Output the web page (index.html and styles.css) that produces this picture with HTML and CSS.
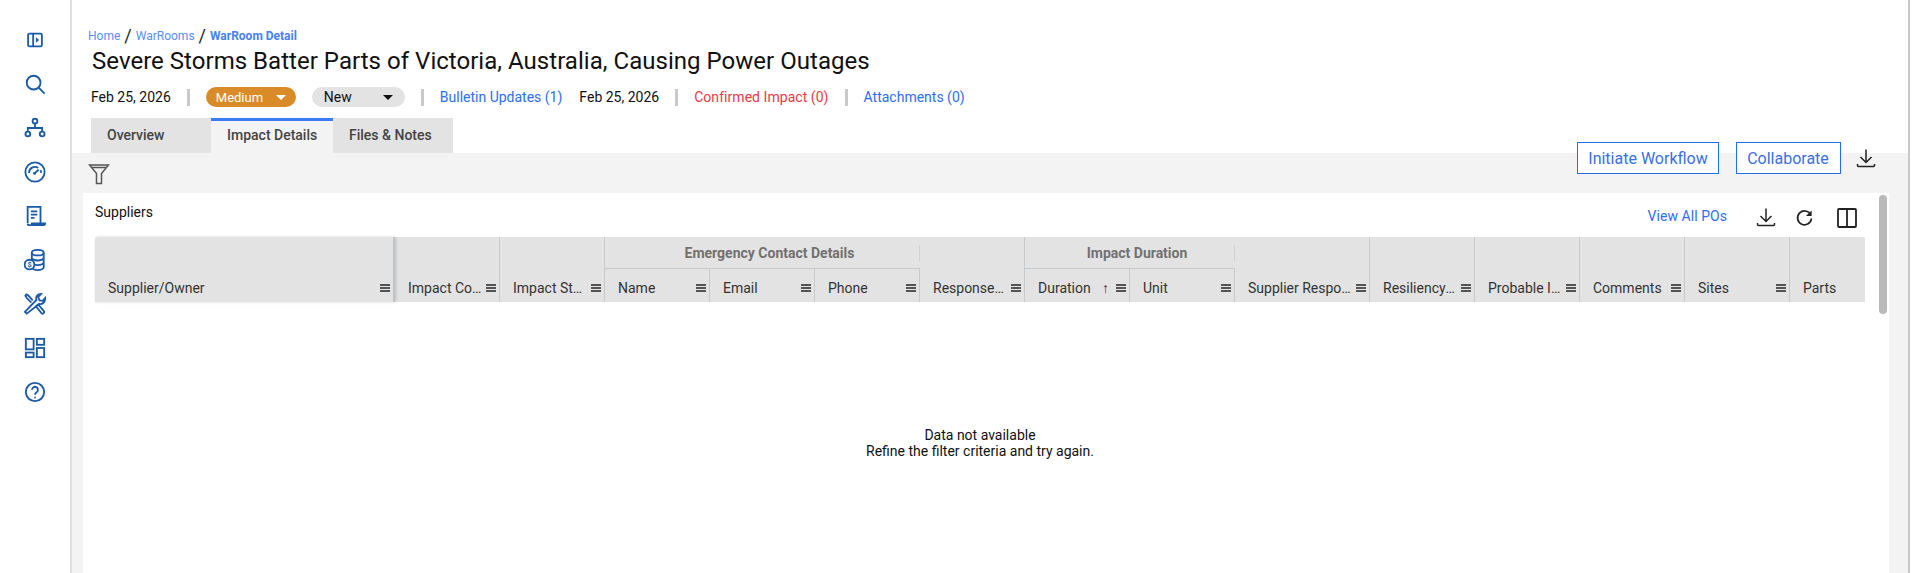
FILE: index.html
```html
<!DOCTYPE html>
<html lang="en">
<head>
<meta charset="utf-8">
<title>WarRoom Detail</title>
<link rel="stylesheet" href="styles.css">
</head>
<body>
<div class="app">
  <nav class="sidebar">
    <svg class="nav-icon" viewBox="0 0 24 24"><rect x="4.500" y="5" width="15" height="14" rx="1.500"/><path d="M10 5v14"/><path class="fill" d="M13 9l3.500 3-3.500 3z"/></svg>
    <svg class="nav-icon" viewBox="0 0 24 24"><circle cx="10.500" cy="10.500" r="7.500"/><path d="M16 16l6.500 6.500"/></svg>
    <svg class="nav-icon" viewBox="0 0 24 24"><circle cx="12" cy="4.500" r="2.600"/><circle cx="4.200" cy="18.500" r="2.600"/><circle cx="19.800" cy="18.500" r="2.600"/><path d="M12 7v5M4.200 16v-4h15.600v4"/></svg>
    <svg class="nav-icon" viewBox="0 0 24 24"><circle cx="12" cy="12" r="10.500"/><path d="M5.500 13a6.500 6.500 0 0 1 10-5.500M18 10a6.500 6.500 0 0 1 .5 3"/><circle class="fill" cx="11.500" cy="13.500" r="1.600"/><path d="M12 13l4-3.500"/></svg>
    <svg class="nav-icon" viewBox="0 0 24 24"><path d="M4 20V2h14v18"/><path d="M7.500 7h7M7.500 10.500h7M7.500 14h4"/><path d="M4 20.500c0 1 1 1.500 2 1.500h15.500c1 0 1.500-.7 1.500-2H7.500"/></svg>
    <svg class="nav-icon" viewBox="0 0 24 24"><ellipse cx="15" cy="4" rx="6.500" ry="3"/><path d="M8.500 4v16c0 1.500 3 3 6.500 3s6.500-1.500 6.500-3V4M8.500 9.500c0 1.600 3 3 6.500 3s6.500-1.400 6.500-3M8.500 14.500c0 1.600 3 3 6.500 3s6.500-1.400 6.500-3"/><circle class="white" cx="6" cy="17" r="5.300"/><text class="coin" x="6" y="20">$</text></svg>
    <svg class="nav-icon" viewBox="0 0 24 24"><path d="M3 22.500l-2-2 12.500-13c-1-3.500 1.500-6.500 5-6.500l-3 3.500 1.500 3.500 3.500.5 2.500-3c.5 4-3 7.500-6.500 6.500z"/><path d="M9.500 8L4.500 2.500 2.500 1.500l-1 1.500 1.500 2.500L8 10.500"/><path d="M13 14.500l6 7.500c1.500 1.500 4-1 2.500-2.500l-6-7z"/></svg>
    <svg class="nav-icon" viewBox="0 0 24 24"><rect x="2" y="2" width="8.500" height="11.500"/><rect x="14" y="2" width="8" height="6.500"/><rect x="2" y="17" width="8.500" height="5"/><rect x="14" y="12" width="8" height="10"/></svg>
    <svg class="nav-icon" viewBox="0 0 24 24"><circle cx="12" cy="12" r="10"/><path d="M8.800 9.500a3.200 3.200 0 1 1 5 2.700c-1.100.8-1.800 1.300-1.800 2.800"/><circle class="fill" cx="12" cy="18" r="1"/></svg>
  </nav>

  <main class="main">
    <header class="page-head">
      <div class="crumbs">
        <a class="crumb">Home</a><span class="crumb-sep">/</span>
        <a class="crumb">WarRooms</a><span class="crumb-sep">/</span>
        <a class="crumb crumb-current">WarRoom Detail</a>
      </div>
      <h1 class="title">Severe Storms Batter Parts of Victoria, Australia, Causing Power Outages</h1>
      <div class="meta">
        <span class="meta-text">Feb 25, 2026</span>
        <span class="divider"></span>
        <span class="pill pill-medium">Medium<i class="caret"></i></span>
        <span class="pill pill-new">New<i class="caret"></i></span>
        <span class="divider"></span>
        <a class="link">Bulletin Updates (1)</a>
        <span class="meta-text meta-date2">Feb 25, 2026</span>
        <span class="divider"></span>
        <a class="link link-red">Confirmed Impact (0)</a>
        <span class="divider"></span>
        <a class="link">Attachments (0)</a>
      </div>
      <div class="tabs">
        <div class="tab tab-1">Overview</div>
        <div class="tab tab-2 active">Impact Details</div>
        <div class="tab tab-3">Files &amp; Notes</div>
      </div>
    </header>

    <section class="body">
      <div class="toolbar">
        <svg class="filter" viewBox="0 0 22 22"><path d="M1.500 2h19l-7 8.500V20.500h-5V10.500z"/><path d="M4 4.500h14"/></svg>
        <div class="actions">
          <button class="btn btn-a">Initiate Workflow</button>
          <button class="btn btn-b">Collaborate</button>
          <svg class="icon-dl" viewBox="0 0 20 20"><path d="M10 1v13M4.500 8.500L10 14l5.500-5.500M1.500 15.500v1.500c0 .6.400 1 1 1h15c.6 0 1-.4 1-1v-1.500"/></svg>
        </div>
      </div>

      <div class="panel">
        <div class="panel-content">
          <div class="panel-head">
            <span class="panel-title">Suppliers</span>
            <a class="link view-all">View All POs</a>
            <svg class="icon-dl icon-dl-2" viewBox="0 0 20 20"><path d="M10 1v13M4.500 8.500L10 14l5.500-5.500M1.500 15.500v1.500c0 .6.400 1 1 1h15c.6 0 1-.4 1-1v-1.500"/></svg>
            <svg class="icon-refresh" viewBox="0 0 20 20"><path d="M16.500 7A7.300 7.300 0 1 0 17.300 11"/><path class="fill-dark" d="M17.500 2.500v6h-6z"/></svg>
            <svg class="icon-cols" viewBox="0 0 20 20"><rect x="1" y="1" width="18" height="18" rx="1"/><path d="M10 1v18"/></svg>
          </div>

          <div class="grid-head">
            <div class="hc w-pin pinned"><span class="hl">Supplier/Owner</span><i class="menu"></i></div>
            <div class="hc w-std"><span class="hl">Impact Confirmed</span><i class="menu"></i></div>
            <div class="hc w-std"><span class="hl">Impact Status</span><i class="menu"></i></div>
            <div class="col-group">
              <div class="group">Emergency Contact Details</div>
              <div class="group-cols">
                <div class="hc w-std"><span class="hl">Name</span><i class="menu"></i></div>
                <div class="hc w-std"><span class="hl">Email</span><i class="menu"></i></div>
                <div class="hc w-std"><span class="hl">Phone</span><i class="menu"></i></div>
              </div>
            </div>
            <div class="hc w-std"><span class="hl">Response Status</span><i class="menu"></i></div>
            <div class="col-group">
              <div class="group">Impact Duration</div>
              <div class="group-cols">
                <div class="hc w-std"><span class="hl">Duration</span><span class="sort">↑</span><i class="menu"></i></div>
                <div class="hc w-std"><span class="hl">Unit</span><i class="menu"></i></div>
              </div>
            </div>
            <div class="hc w-wide"><span class="hl">Supplier Response Date</span><i class="menu"></i></div>
            <div class="hc w-std"><span class="hl">Resiliency Score</span><i class="menu"></i></div>
            <div class="hc w-std"><span class="hl">Probable Impact</span><i class="menu"></i></div>
            <div class="hc w-std"><span class="hl">Comments</span><i class="menu"></i></div>
            <div class="hc w-std"><span class="hl">Sites</span><i class="menu"></i></div>
            <div class="hc w-last"><span class="hl">Parts</span></div>
          </div>

          <div class="empty">Data not available<br>Refine the filter criteria and try again.</div>
        </div>
        <div class="scrollbar"></div>
      </div>
    </section>
  </main>
</div>
</body>
</html>
```

FILE: styles.css
```css
* { box-sizing: border-box; }
html, body { margin: 0; height: 100%; overflow: hidden; }
body { background: #fff; font-family: Roboto, "Liberation Sans", sans-serif; color: #111; font-size: 14px; }
.app { display: flex; height: 573px; }

.sidebar { width: 72px; flex: none; border-right: 2px solid #dedede; display: flex; flex-direction: column; align-items: center; gap: 22px; padding-top: 29px; }
.nav-icon { width: 22px; height: 22px; flex: none; fill: none; stroke: #1a5aa6; stroke-width: 2; }
.nav-icon .fill { fill: #1a5aa6; stroke: none; }
.nav-icon .white { fill: #fff; }
.nav-icon .coin { font: 700 8px Roboto, sans-serif; fill: #1a5aa6; stroke: none; text-anchor: middle; }

.main { flex: 1; min-width: 0; display: flex; flex-direction: column; margin-right: 2px; border-right: 2px solid #c8c8c8; }
.page-head { padding: 28px 0 0 16px; height: 153px; flex: none; }
.crumbs { display: flex; align-items: center; height: 16px; font-size: 12px; }
.crumb { color: #5b8df6; }
.crumb-current { font-weight: 700; color: #4a7ff0; }
.crumb-sep { font-size: 18px; line-height: 16px; color: #222; margin: 0 4px; }
.title { margin: 1px 0 0 4px; font-size: 24px; font-weight: 400; line-height: 32px; color: #111; letter-spacing: .03px; }
.meta { display: flex; align-items: center; height: 20px; margin: 10px 0 0 3px; font-size: 14px; }
.divider { width: 3px; height: 17px; background: #c9c9c9; margin: 0 16px; }
.link { color: #2f6df0; }
.link-red { color: #e8394a; letter-spacing: .05px; }
.meta-date2 { margin-left: 17px; }
.pill { display: inline-flex; align-items: center; justify-content: space-between; height: 20px; border-radius: 10px; font-size: 13px; }
.pill-medium { width: 90px; margin-right: 16px; padding: 0 10px; background: #d98b27; color: #fff; }
.pill-new { width: 93px; padding: 0 12px; background: #e3e3e3; color: #111; font-size: 14px; }
.caret { width: 0; height: 0; border: 5px solid transparent; border-top: 5px solid currentColor; border-bottom: 0; }
.tabs { display: flex; margin: 11px 0 0 3px; height: 35px; }
.tab { height: 35px; background: #e3e3e3; color: #444; font-weight: 500; font-size: 14px; padding: 9px 0 0 16px; }
.tab-1 { width: 120px; }
.tab-2 { width: 122px; }
.tab-3 { width: 120px; }
.tab.active { background: #f3f3f3; border-top: 3px solid #3b7bf5; padding-top: 6px; }

.body { flex: 1; min-height: 0; background: #f3f3f3; display: flex; flex-direction: column; padding-left: 11px; }
.toolbar { height: 40px; flex: none; display: flex; justify-content: space-between; }
.filter { width: 22px; height: 22px; margin: 10px 0 0 5px; fill: none; stroke: #555; stroke-width: 1.500; }
.actions { display: flex; align-items: center; height: 32px; margin-top: -11px; padding-right: 32px; }
.btn { height: 32px; background: #fff; border: 1.500px solid #1f6ff0; color: #3a6fe0; font: 400 16px Roboto, sans-serif; padding: 0 0 0 0; }
.btn-a { width: 142px; margin-right: 17px; }
.btn-b { width: 105px; margin-right: 15px; padding-right: 1px; }
.icon-dl { width: 20px; height: 21px; fill: none; stroke: #222; stroke-width: 1.500; }

.panel { flex: 1; min-height: 0; width: 1806px; background: #fff; display: flex; padding-left: 12px; }
.panel-content { width: 1770px; flex: none; }
.panel-head { height: 44px; display: flex; align-items: flex-start; }
.panel-title { margin-top: 11px; flex: 1; font-size: 14px; }
.view-all { margin-top: 15px; font-size: 14px; letter-spacing: .05px; }
.icon-dl-2 { margin: 14px 0 0 29px; flex: none; }
.icon-refresh { width: 19px; height: 19px; margin: 15px 0 0 19px; flex: none; fill: none; stroke: #222; stroke-width: 1.800; }
.icon-refresh .fill-dark { fill: #222; stroke: none; }
.icon-cols { width: 20px; height: 20px; margin: 15px 8px 0 23px; flex: none; fill: none; stroke: #222; stroke-width: 1.800; }

.grid-head { display: flex; height: 65px; background: #e3e3e3; border-radius: 2px 2px 0 0; font-size: 14px; color: #333; }
.col-group { display: flex; flex-direction: column; }
.group { height: 32px; display: flex; align-items: center; justify-content: center; padding-left: 14px; font-weight: 700; color: #717171; font-size: 14px; border-bottom: 1px solid #c8cbce; position: relative; }
.group::after { content: ""; position: absolute; right: 0; top: 8px; width: 1px; height: 16px; background: #cfd2d5; }
.group-cols { display: flex; flex: 1; }
.hc { display: flex; align-items: flex-end; padding: 0 3px 3px 13px; border-right: 1px solid #c8cbce; min-width: 0; flex: none; }
.w-std { width: 105px; }
.w-pin { width: 300px; }
.w-wide { width: 135px; }
.w-last { width: 75px; border-right: 0; }
.pinned { border-right: 2px solid #bfc2c5; box-shadow: 1px 0 3px rgba(0,0,0,.15); }
.hl { flex: 1; min-width: 0; white-space: nowrap; overflow: hidden; text-overflow: ellipsis; line-height: 22px; }
.sort { margin: 0 7px 0 0; font-size: 14px; font-weight: 700; line-height: 22px; color: #333; }
.menu { width: 10px; flex: none; height: 8px; margin: 0 0 7px 4px; border-top: 2px solid #555; border-bottom: 2px solid #555; }
.menu::after { content: ""; display: block; height: 2px; margin-top: 1px; background: #555; }
.sort + .menu { margin-left: 0; }
.empty { text-align: center; margin-top: 125px; font-size: 14px; line-height: 16px; color: #111; }
.scrollbar { width: 8px; height: 119px; margin: 2px 0 0 14px; background: #bababa; border-radius: 4px; flex: none; }
```
